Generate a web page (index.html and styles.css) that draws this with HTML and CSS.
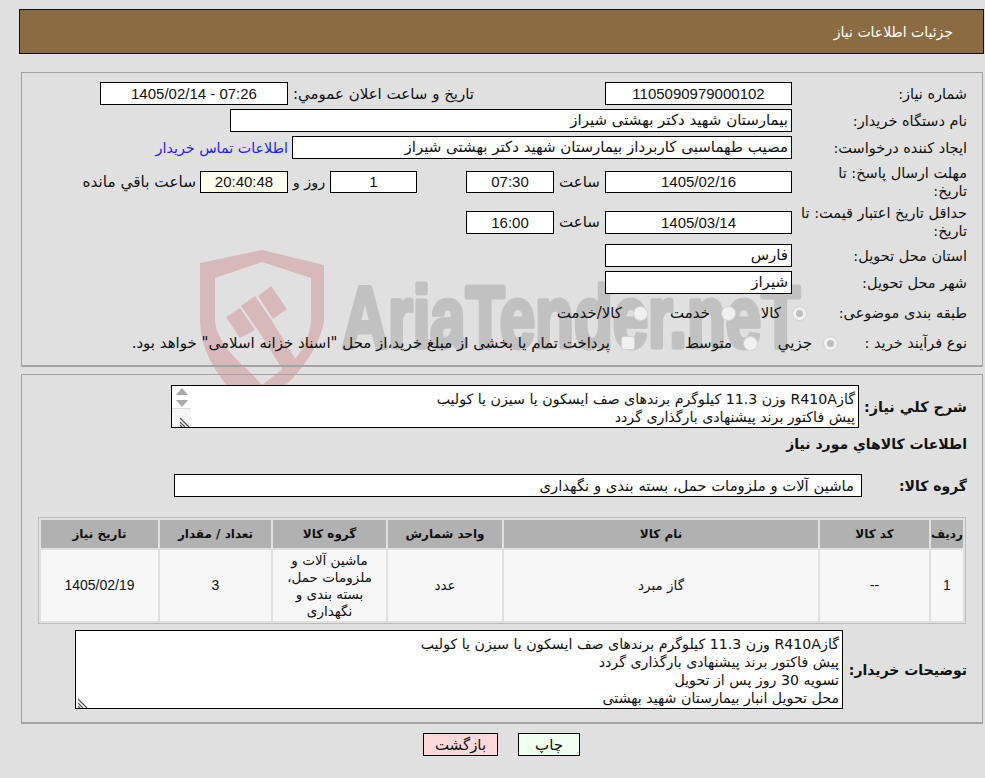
FILE: index.html
```html
<!DOCTYPE html>
<html lang="fa" dir="rtl">
<head>
<meta charset="utf-8">
<title>جزئیات اطلاعات نیاز</title>
<link rel="stylesheet" href="styles.css">
</head>
<body>
<svg class="watermark" width="985" height="400" viewBox="0 0 985 400" aria-hidden="true">
  <path class="wm-red" fill-rule="evenodd" d="M200 263 L262 250 L324 265 L324 322 Q318 350 293 378 L270 400 L240 400 Q200 360 200 320 Z M215 278 L215 322 Q218 345 250 372 L262 385 L294 360 Q311 340 311 318 L311 278 L262 262 Z"/>
  <path class="wm-red" d="M226 317 L240 308 L255 330 L240 338 Z M241 306 L255 296 L270 318 L296 360 L284 372 L258 330 Z M258 296 L271 286 L287 309 L273 319 Z"/>
  <text class="wm-text" x="342" y="347" textLength="458" lengthAdjust="spacingAndGlyphs" direction="ltr">AriaTender.neT</text>
</svg>
<header class="title-bar"><h1>جزئیات اطلاعات نیاز</h1></header>

<section class="panel panel-info">
  <div class="row r1">
    <span class="label">شماره نیاز:</span>
    <span class="field w187 center num">1105090979000102</span>
    <span class="label-mid gap-ann">تاریخ و ساعت اعلان عمومي:</span>
    <span class="field w188 center num" dir="ltr">1405/02/14 - 07:26</span>
  </div>
  <div class="row r2">
    <span class="label">نام دستگاه خریدار:</span>
    <span class="field w562">بیمارستان شهید دکتر بهشتی شیراز</span>
  </div>
  <div class="row r3">
    <span class="label">ایجاد کننده درخواست:</span>
    <span class="field w500">مصیب طهماسبی کاربرداز بیمارستان شهید دکتر بهشتی شیراز</span>
    <a class="contact" href="#">اطلاعات تماس خریدار</a>
  </div>
  <div class="row r4">
    <span class="label">مهلت ارسال پاسخ: تا<br>تاریخ:</span>
    <span class="field w187 center num">1405/02/16</span>
    <span class="word w-sa">ساعت</span>
    <span class="field w88 center num">07:30</span>
    <span class="spacer-49"></span>
    <span class="field w87 center num">1</span>
    <span class="word w-day">روز و</span>
    <span class="field w88 center num clock">20:40:48</span>
    <span class="word w-left">ساعت باقي مانده</span>
  </div>
  <div class="row r5">
    <span class="label">حداقل تاریخ اعتبار قیمت: تا<br>تاریخ:</span>
    <span class="field w187 center num">1405/03/14</span>
    <span class="word w-sa">ساعت</span>
    <span class="field w88 center num">16:00</span>
  </div>
  <div class="row r6">
    <span class="label">استان محل تحویل:</span>
    <span class="field w187">فارس</span>
  </div>
  <div class="row r7">
    <span class="label">شهر محل تحویل:</span>
    <span class="field w187">شیراز</span>
  </div>
  <div class="row r8">
    <span class="label">طبقه بندی موضوعی:</span>
    <span class="opts">
      <span class="radio on"></span><span class="opt o-kala">کالا</span>
      <span class="radio"></span><span class="opt o-khed">خدمت</span>
      <span class="radio"></span><span class="opt">کالا/خدمت</span>
    </span>
  </div>
  <div class="row r9">
    <span class="label">نوع فرآیند خرید :</span>
    <span class="opts opts-b">
      <span class="radio on"></span><span class="opt o-joz">جزيي</span>
      <span class="radio"></span><span class="opt o-mot">متوسط</span>
      <span class="check"></span><span class="opt">پرداخت تمام یا بخشی از مبلغ خرید،از محل "اسناد خزانه اسلامی" خواهد بود.</span>
    </span>
  </div>
</section>

<section class="panel panel-items">
  <div class="row-desc">
    <span class="label-b lb-desc">شرح كلي نياز:</span>
    <div class="area area-short">
      <div class="area-text">گازR410A وزن 11.3 کیلوگرم برندهای صف ایسکون یا سیزن یا کولیب<br>پیش فاکتور برند پیشنهادی بارگذاری گردد</div>
      <div class="scroller">
        <span class="arrow up"></span><span class="arrow down"></span>
        <span class="grip"><svg width="12" height="10" viewBox="0 0 12 10"><path d="M1 1 L10 10 M1 5 L6 10 M1 8 L3 10" stroke="#555" stroke-width="1.2" fill="none"/></svg></span>
      </div>
    </div>
  </div>
  <h2 class="items-head">اطلاعات كالاهاي مورد نياز</h2>
  <div class="row-group">
    <span class="label-b lb-group">گروه كالا:</span>
    <span class="field w688 group-val">ماشین آلات و ملزومات حمل، بسته بندی و نگهداری</span>
  </div>
  <table class="items">
    <thead>
      <tr>
        <th class="c-idx">ردیف</th><th class="c-code">کد کالا</th><th class="c-name">نام کالا</th><th class="c-unit">واحد شمارش</th><th class="c-group">گروه کالا</th><th class="c-qty">تعداد / مقدار</th><th class="c-date">تاریخ نیاز</th>
      </tr>
    </thead>
    <tbody>
      <tr>
        <td class="num">1</td><td class="num">--</td><td>گاز مبرد</td><td>عدد</td><td>ماشین آلات و ملزومات حمل، بسته بندی و نگهداری</td><td class="num">3</td><td class="num">1405/02/19</td>
      </tr>
    </tbody>
  </table>
  <div class="row-notes">
    <span class="label-b lb-notes">توضيحات خريدار:</span>
    <div class="area area-tall">
      <div class="area-text">گازR410A وزن 11.3 کیلوگرم برندهای صف ایسکون یا سیزن یا کولیب<br>پیش فاکتور برند پیشنهادی بارگذاری گردد<br>تسویه 30 روز پس از تحویل<br>محل تحویل انبار بیمارستان شهید بهشتی</div>
      <span class="grip grip-solo"><svg width="12" height="10" viewBox="0 0 12 10"><path d="M1 1 L10 10 M1 5 L6 10 M1 8 L3 10" stroke="#555" stroke-width="1.2" fill="none"/></svg></span>
    </div>
  </div>
</section>

<div class="actions">
  <button class="btn btn-print" type="button">چاپ</button>
  <button class="btn btn-back" type="button">بازگشت</button>
</div>
</body>
</html>
```
FILE: styles.css
```css
* { box-sizing: border-box; }
html, body { height: 100%; }
body {
  margin: 0;
  background: #e0e0e0;
  color: #111;
  font: 14.5px/18px "DejaVu Sans", sans-serif;
  overflow: hidden;
}
.watermark { position: absolute; left: 0; top: 0; z-index: -1; }
.wm-red { fill: #d8b9bb; }
.wm-text {
  fill: #c1c1c1;
  stroke: #c1c1c1;
  stroke-width: 5;
  stroke-linejoin: round;
  font: bold 87px "Liberation Sans", sans-serif;
}

.title-bar {
  margin: 9px 1px 0 0;
  width: 965px;
  height: 45px;
  background: #8b6b42;
  border: 1px solid #111;
  display: flex;
  align-items: center;
  padding-right: 30px;
}
.title-bar h1 { margin: 0; color: #fff; font-size: 14px; font-weight: normal; }

.panel {
  width: 962px;
  margin-right: 2px;
  border: 1px solid #a3a3a3;
  border-width: 1px 1px 2px 1px;
  padding-right: 15px;
}
.panel-info { margin-top: 18px; height: 295px; padding-top: 9px; }
.panel-items { margin-top: 7px; height: 350px; padding-top: 10px; }

.row { display: flex; align-items: center; }
.r1 { height: 23px; }
.r2 { height: 23px; margin-top: 4px; }
.r3 { height: 23px; margin-top: 4px; }
.r4 { height: 36px; margin-top: 5px; }
.r5 { height: 36px; margin-top: 4px; }
.r6 { height: 23px; margin-top: 4px; }
.r7 { height: 23px; margin-top: 4px; }
.r8 { height: 20px; margin-top: 9px; }
.r9 { height: 20px; margin-top: 10px; }

.label { width: 175px; flex: none; line-height: 18px; }
.field {
  display: block;
  flex: none;
  height: 23px;
  line-height: 21px;
  font-size: 15px;
  background: #fff;
  border: 1px solid #000;
  padding: 0 3px;
  white-space: nowrap;
  overflow: hidden;
}
.r4 .field { height: 22px; line-height: 20px; }
.center { text-align: center; }
.num { font-family: "Liberation Sans", sans-serif; font-size: 15px; }
.w187 { width: 187px; }
.w188 { width: 188px; }
.w88 { width: 88px; }
.w87 { width: 87px; }
.w562 { width: 562px; }
.w500 { width: 500px; }
.w688 { width: 688px; }
.clock { background: #ffffee; }
.label-mid { display: block; }
.gap-ann { margin: 0 131px 0 4px; white-space: nowrap; width: 182px; font-size: 15px; }
.contact { color: #2222ee; text-decoration: none; margin-right: 4px; white-space: nowrap; font-size: 14.3px; }
.word { white-space: nowrap; flex: none; text-align: center; font-size: 15px; }
.w-sa { width: 51px; }
.spacer-49 { width: 49px; flex: none; }
.w-day { width: 42px; font-size: 14.5px; }
.w-left { width: 122px; padding-right: 4px; text-align: right; font-size: 15.3px; }

.opts { display: flex; align-items: center; white-space: nowrap; margin-right: -15px; font-size: 15px; }
.opts-b { margin-right: -46px; }
.radio, .check {
  flex: none;
  width: 15px;
  height: 15px;
  background: #f0f0f0;
  border: 1px solid #d2d2d2;
  border-radius: 50%;
  position: relative;
}
.radio.on::after {
  content: "";
  position: absolute;
  inset: 3px;
  border-radius: 50%;
  background: #bdbdbd;
}
.check { border-radius: 3px; width: 14px; height: 14px; }
.opt { margin-right: 11px; }
.o-kala { width: 45px; }
.o-khed { width: 62px; }
.o-joz { width: 54px; }
.o-mot { width: 97px; }

.row-desc, .row-group, .row-notes { display: flex; align-items: center; }
.label-b { font-weight: bold; font-size: 14px; flex: none; white-space: nowrap; }
.lb-desc { width: 108px; font-size: 14.4px; }
.lb-group { width: 105px; }
.lb-notes { width: 124px; }
.area {
  position: relative;
  background: #fff;
  border: 1px solid #000;
  flex: none;
  overflow: hidden;
  padding: 4px 3px 3px;
  font-size: 14.2px;
}
.area-short { width: 688px; height: 43px; }
.area-tall { width: 768px; height: 79px; }
.area-text { white-space: nowrap; line-height: 18px; }
.scroller {
  position: absolute;
  left: 0; top: 0; bottom: 0;
  width: 19px;
  background: #fff;
}
.arrow {
  position: absolute;
  left: 4px;
  width: 0; height: 0;
  border-left: 6px solid transparent;
  border-right: 6px solid transparent;
}
.up { top: 2px; border-bottom: 7px solid #a8a8a8; }
.down { top: 14px; border-top: 7px solid #a8a8a8; }
.grip {
  position: absolute;
  left: 0;
  bottom: 0;
  width: 19px;
  height: 19px;
  background: #f6f6f6;
  border-top: 1px solid #ddd;
  display: flex;
  align-items: flex-end;
}
.grip-solo { width: 12px; height: 11px; background: transparent; border: 0; left: 1px; }

.items-head { margin: 7px 0 0; height: 19px; font-size: 14px; line-height: 19px; font-weight: bold; }
.row-group { margin-top: 20px; }
.group-val { padding-right: 7px; font-size: 14.8px; }

.items {
  width: 928px;
  margin: 20px 1px 0 0;
  border: 1px solid #bdbdbd;
  border-collapse: separate;
  border-spacing: 2px;
  table-layout: fixed;
}
.items th {
  height: 28px;
  padding: 0;
  background: #b1b1b1;
  font-size: 12px;
  line-height: 14px;
  font-weight: bold;
  color: #111;
}
.items td {
  height: 71px;
  padding: 0 6px;
  background: #f7f7f7;
  text-align: center;
  font-size: 13.5px;
  line-height: 17px;
}
.items td.num { font-size: 14px; }
.c-idx { width: 32px; }
.c-code { width: 109px; }
.c-name { width: 314px; }
.c-unit { width: 114px; }
.c-group { width: 113px; }
.c-qty { width: 111px; }
.c-date { width: 117px; }

.row-notes { margin-top: 6px; }

.actions { display: flex; justify-content: center; gap: 20px; margin-top: 9px; padding-left: 18px; }
.btn {
  height: 23px;
  border: 1px solid #000;
  font: 15px/18px "DejaVu Sans", sans-serif;
  color: #111;
  padding: 0;
}
.btn-print { width: 62px; background: #efffef; }
.btn-back { width: 75px; background: #ffd9d9; }
```
